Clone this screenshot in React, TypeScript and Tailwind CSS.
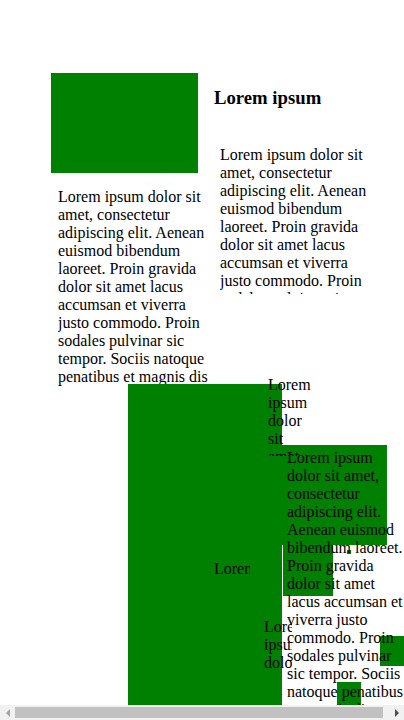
const lorem =
  "Lorem ipsum dolor sit amet, consectetur adipiscing elit. Aenean euismod bibendum laoreet. Proin gravida dolor sit amet lacus accumsan et viverra justo commodo. Proin sodales pulvinar sic tempor. Sociis natoque penatibus et magnis dis parturient montes, nascetur ridiculus mus.";

const serif = "font-['Liberation_Serif','Times_New_Roman',serif] text-black";

function Scrollbar() {
  return (
    <div className="flex h-[15px] w-full items-center bg-[#f1f1f1]">
      <div className="flex w-[15px] h-[15px] items-center justify-center">
        <div className="w-0 h-0 border-y-[4px] border-y-transparent border-r-[4px] border-r-[#a3a3a3]" />
      </div>
      <div className="flex-1 h-[15px] flex items-center">
        <div className="w-[368px] h-[11px] bg-[#c1c1c1]" />
      </div>
      <div className="flex w-[15px] h-[15px] items-center justify-center">
        <div className="w-0 h-0 border-y-[4px] border-y-transparent border-l-[4px] border-l-[#505050]" />
      </div>
    </div>
  );
}

export default function App() {
  return (
    <div className={`flex flex-col h-[720px] w-full overflow-hidden bg-white ${serif}`}>
      <div className="relative h-[705px] w-full overflow-hidden">
        {/* top: image + heading + two columns */}
        <div className="flex pt-[73px] pl-[51px]">
          <div className="w-[147px]">
            <div className="w-[147px] h-[100px] bg-[#008000]" />
            <p className="ml-[7px] mt-[15px] w-[150px] h-[198px] overflow-hidden text-[16px] leading-[18px]">
              {lorem}
            </p>
          </div>
          <div className="ml-[16px]">
            <h3 className="mt-[14px] text-[18.72px] font-bold leading-[21.5px]">
              Lorem ipsum
            </h3>
            <p className="ml-[6px] mt-[37.5px] w-[150px] h-[148px] overflow-hidden text-[16px] leading-[18px]">
              {lorem}
            </p>
          </div>
        </div>

        {/* overlapping boxes */}
        <div className="absolute left-[128px] top-[384px] w-[154px] h-[330px] bg-[#008000]" />
        <div className="absolute left-[282px] top-[445px] w-[105px] h-[100px] bg-[#008000]" />
        <div className="absolute left-[283px] top-[545px] w-[50px] h-[51px] bg-[#008000]" />
        <div className="absolute left-[347px] top-[550px] w-[4px] h-[4px] bg-[#008000]" />
        <div className="absolute left-[380px] top-[636px] w-[30px] h-[30px] bg-[#008000]" />
        <div className="absolute left-[337px] top-[682px] w-[24px] h-[30px] bg-[#008000]" />

        {/* texts on top */}
        <p className="absolute left-[268px] top-[376px] w-[45px] h-[80px] overflow-hidden text-[16px] leading-[18px]">
          {lorem}
        </p>
        <p className="absolute left-[287px] top-[449px] w-[117px] text-[16px] leading-[18px]">
          {lorem}
        </p>
        <p className="absolute left-[214px] top-[560px] w-[36px] h-[18px] overflow-hidden whitespace-nowrap text-[16px] leading-[18px]">
          Lorem ipsum
        </p>
        <p className="absolute left-[264px] top-[618px] w-[28px] h-[54px] overflow-hidden text-[16px] leading-[18px]">
          Lorem ipsum dolor sit amet
        </p>
      </div>
      <Scrollbar />
    </div>
  );
}
